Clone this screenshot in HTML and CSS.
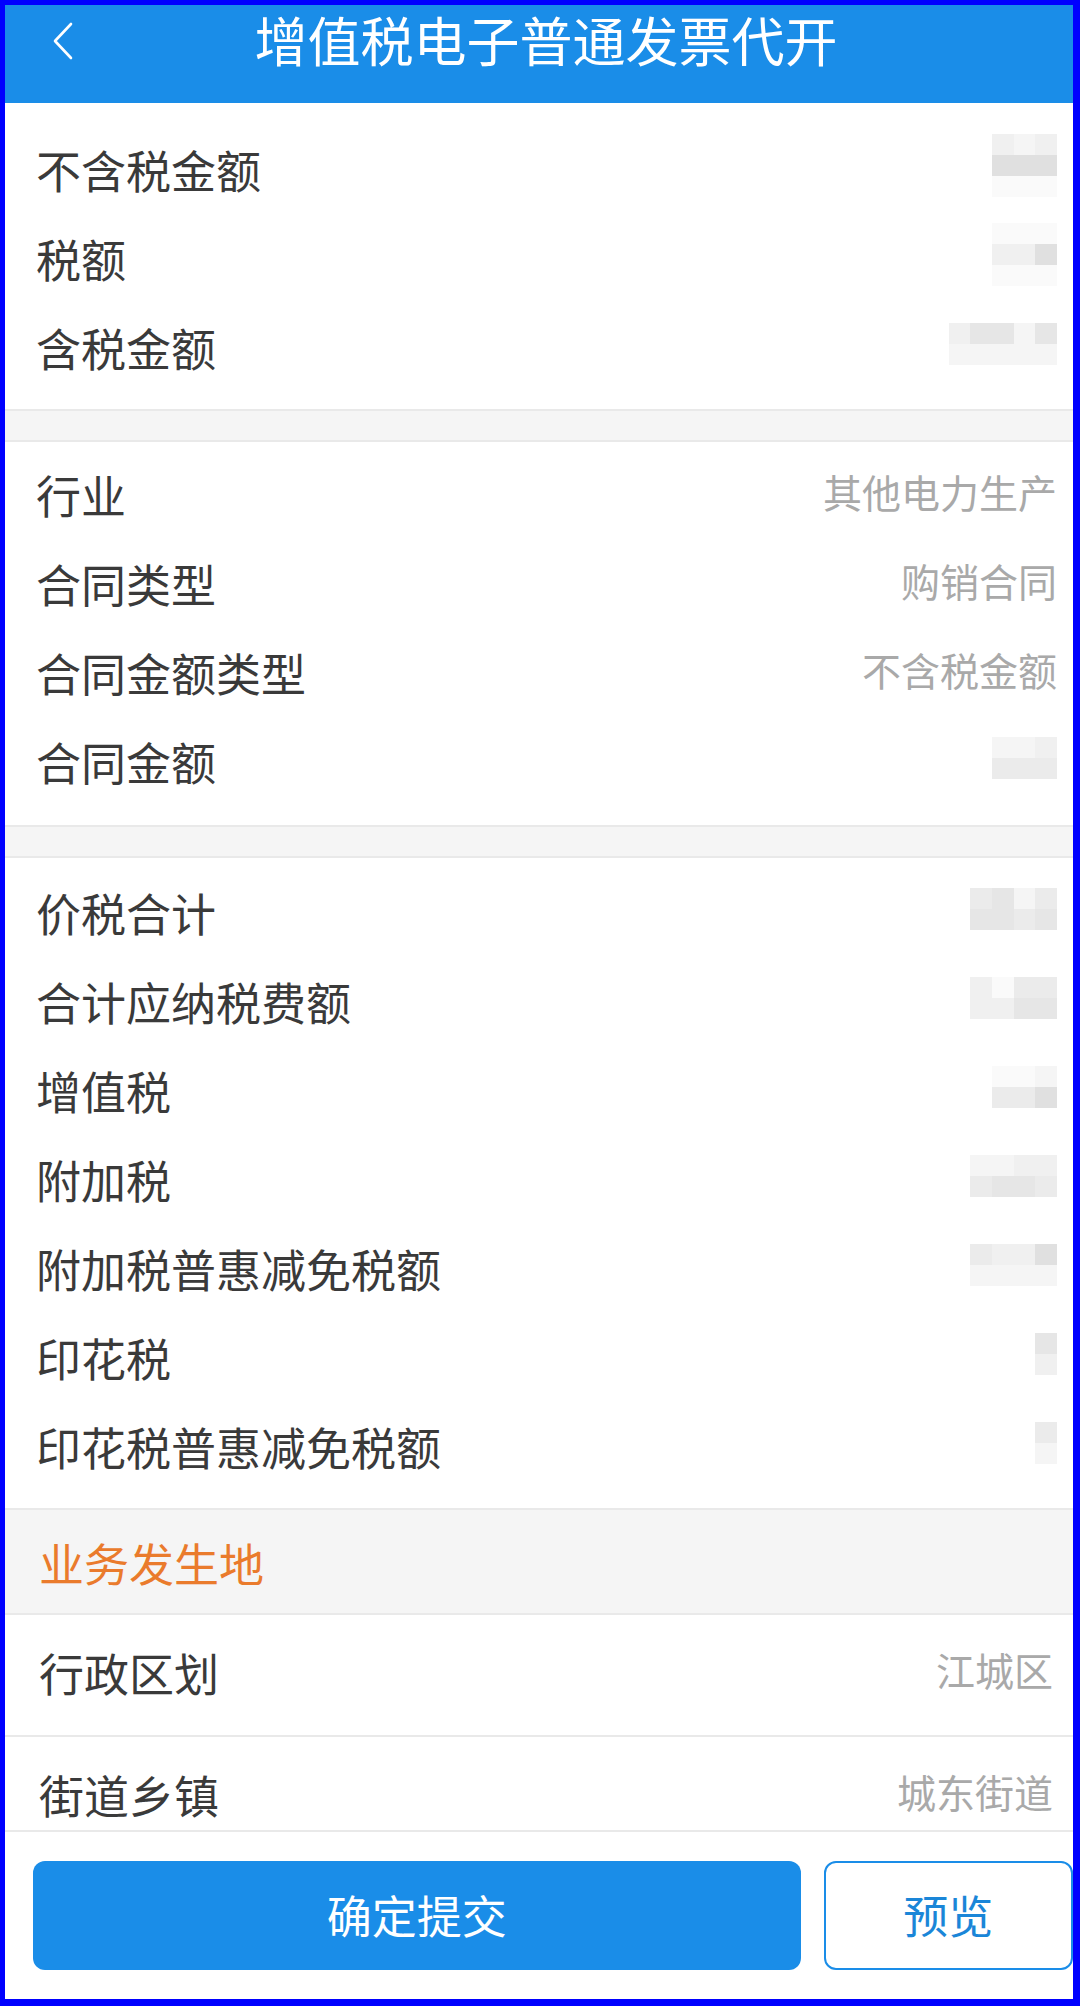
FILE: index.html
```html
<!DOCTYPE html>
<html lang="zh-CN">
  <head>
    <meta charset="UTF-8" />
    <meta name="viewport" content="width=device-width, initial-scale=1.0" />
    <title>增值税电子普通发票代开</title>
    <link rel="stylesheet" href="styles.css">
  </head>
  <body>
    <div class="screen">
      <header class="topbar">
        <span class="back">
          <svg width="22" height="38" viewBox="0 0 22 38">
            <path d="M19 2 L3 19 L19 36" fill="none" stroke="#fff" stroke-width="2.6" stroke-linecap="round" stroke-linejoin="round" />
          </svg>
        </span>
        <h1 class="title">增值税电子普通发票代开</h1>
      </header>

      <main class="content">
        <section class="group group-amounts">
          <div class="row">
            <span class="label">不含税金额</span>
            <span class="mosaic c3">
              <i class="s2"></i><i class="s1"></i><i class="s2"></i>
              <i class="s5"></i><i class="s5"></i><i class="s5"></i>
              <i class="s0"></i><i class="s0"></i><i class="s0"></i>
            </span>
          </div>
          <div class="row">
            <span class="label">税额</span>
            <span class="mosaic c3">
              <i class="s0"></i><i class="s0"></i><i class="s0"></i>
              <i class="s2"></i><i class="s2"></i><i class="s5"></i>
              <i class="s0"></i><i class="s0"></i><i class="s0"></i>
            </span>
          </div>
          <div class="row">
            <span class="label">含税金额</span>
            <span class="mosaic c5">
              <i class="s2"></i><i class="s4"></i><i class="s4"></i><i class="s1"></i><i class="s4"></i>
              <i class="s1"></i><i class="s1"></i><i class="s1"></i><i class="s1"></i><i class="s1"></i>
            </span>
          </div>
        </section>

        <div class="gap"></div>

        <section class="group group-contract">
          <div class="row">
            <span class="label">行业</span>
            <span class="value">其他电力生产</span>
          </div>
          <div class="row">
            <span class="label">合同类型</span>
            <span class="value">购销合同</span>
          </div>
          <div class="row">
            <span class="label">合同金额类型</span>
            <span class="value">不含税金额</span>
          </div>
          <div class="row">
            <span class="label">合同金额</span>
            <span class="mosaic c3">
              <i class="s1"></i><i class="s1"></i><i class="s2"></i>
              <i class="s3"></i><i class="s3"></i><i class="s3"></i>
            </span>
          </div>
        </section>

        <div class="gap"></div>

        <section class="group group-taxes">
          <div class="row">
            <span class="label">价税合计</span>
            <span class="mosaic c4">
              <i class="s3"></i><i class="s4"></i><i class="s1"></i><i class="s3"></i>
              <i class="s4"></i><i class="s4"></i><i class="s3"></i><i class="s4"></i>
            </span>
          </div>
          <div class="row">
            <span class="label">合计应纳税费额</span>
            <span class="mosaic c4">
              <i class="s2"></i><i class="s0"></i><i class="s3"></i><i class="s3"></i>
              <i class="s2"></i><i class="s2"></i><i class="s4"></i><i class="s4"></i>
            </span>
          </div>
          <div class="row">
            <span class="label">增值税</span>
            <span class="mosaic c3">
              <i class="s0"></i><i class="s0"></i><i class="s1"></i>
              <i class="s3"></i><i class="s3"></i><i class="s5"></i>
            </span>
          </div>
          <div class="row">
            <span class="label">附加税</span>
            <span class="mosaic c4">
              <i class="s1"></i><i class="s1"></i><i class="s2"></i><i class="s2"></i>
              <i class="s3"></i><i class="s4"></i><i class="s4"></i><i class="s3"></i>
            </span>
          </div>
          <div class="row">
            <span class="label">附加税普惠减免税额</span>
            <span class="mosaic c4">
              <i class="s3"></i><i class="s2"></i><i class="s2"></i><i class="s5"></i>
              <i class="s1"></i><i class="s1"></i><i class="s1"></i><i class="s1"></i>
            </span>
          </div>
          <div class="row">
            <span class="label">印花税</span>
            <span class="mosaic c1">
              <i class="s4"></i>
              <i class="s2"></i>
            </span>
          </div>
          <div class="row">
            <span class="label">印花税普惠减免税额</span>
            <span class="mosaic c1">
              <i class="s3"></i>
              <i class="s1"></i>
            </span>
          </div>
        </section>

        <div class="group-title">业务发生地</div>

        <div class="row row-tall">
          <span class="label">行政区划</span>
          <span class="value">江城区</span>
        </div>
        <div class="row row-tall">
          <span class="label">街道乡镇</span>
          <span class="value">城东街道</span>
        </div>
      </main>

      <footer class="actions">
        <button class="btn btn-primary">确定提交</button>
        <button class="btn btn-outline">预览</button>
      </footer>
    </div>
  </body>
</html>
```

FILE: styles.css
```css
html,
body {
  margin: 0;
  padding: 0;
  background: #fff;
}

body {
  font-family: "Noto Sans CJK SC", "Noto Sans", sans-serif;
  color: #3a3a3a;
}

.screen {
  width: 1080px;
  height: 2006px;
  box-sizing: border-box;
  border: solid #0000ff;
  border-width: 5px 7px 7px 5px;
  display: flex;
  flex-direction: column;
  overflow: hidden;
  background: #fff;
}

/* top bar */
.topbar {
  flex: none;
  height: 98px;
  background: #1a8de8;
  display: grid;
  grid-template-columns: 120px 1fr 120px;
  align-items: start;
}

.back {
  display: flex;
  padding: 17px 0 0 47px;
}

.title {
  margin: 0;
  padding: 2px 0 0 14px;
  font-size: 53px;
  font-weight: normal;
  line-height: 64px;
  text-align: center;
  color: #fff;
  white-space: nowrap;
}

/* scrolling list */
.content {
  flex: 1;
  overflow: hidden;
}

.group {
  padding-bottom: 14px;
}

.group-amounts {
  padding-top: 25px;
}

.group-contract {
  padding-top: 11px;
  padding-bottom: 16px;
}

.group-taxes {
  padding-top: 13px;
}

.gap {
  height: 29px;
  background: #f5f5f5;
  border-top: 2px solid #e9e9e9;
  border-bottom: 2px solid #e9e9e9;
}

.row {
  height: 89px;
  display: flex;
  align-items: center;
  justify-content: space-between;
  padding: 0 16px 0 31px;
}

.label {
  font-size: 45px;
  line-height: 80px;
  margin-bottom: 5px;
  color: #3a3a3a;
  white-space: nowrap;
}

.value {
  font-size: 39px;
  line-height: 60px;
  color: #a9a9a9;
  margin-bottom: 13px;
  white-space: nowrap;
}

.row-tall {
  height: 120px;
  padding-left: 34px;
  padding-right: 20px;
  border-bottom: 2px solid #e9e9e9;
}

.group-title {
  height: 97px;
  padding: 6px 0 0 34px;
  line-height: 94px;
  font-size: 45px;
  color: #ea7b2c;
  background: #f5f5f5;
  border-top: 2px solid #e9e9e9;
  border-bottom: 2px solid #e9e9e9;
}

/* masked values */
.mosaic {
  display: grid;
  grid-auto-rows: 21px;
  margin-bottom: 14px;
}

.mosaic.c1 { grid-template-columns: 22px; }
.mosaic.c3 { grid-template-columns: repeat(3, 21.7px); }
.mosaic.c4 { grid-template-columns: repeat(4, 21.7px); }
.mosaic.c5 { grid-template-columns: repeat(5, 21.7px); }

.mosaic i { display: block; }
.s0 { background: #fafafa; }
.s1 { background: #f5f5f5; }
.s2 { background: #f0f0f0; }
.s3 { background: #ebebeb; }
.s4 { background: #e6e6e6; }
.s5 { background: #e0e0e0; }

/* bottom actions */
.actions {
  flex: none;
  display: flex;
  gap: 23px;
  padding: 29px 0 29px 28px;
  border-top: 2px solid #e9e9e9;
  background: #fff;
}

.btn {
  height: 109px;
  border-radius: 12px;
  font-family: "Noto Sans CJK SC", "Noto Sans", sans-serif;
  font-size: 45px;
  line-height: 1;
  padding-bottom: 4px;
  cursor: pointer;
}

.btn-primary {
  width: 770px;
  border: none;
  background: #1a8de8;
  color: #fff;
}

.btn-outline {
  width: 250px;
  border: 2px solid #1a8de8;
  background: #fff;
  color: #1a86d8;
}
```
